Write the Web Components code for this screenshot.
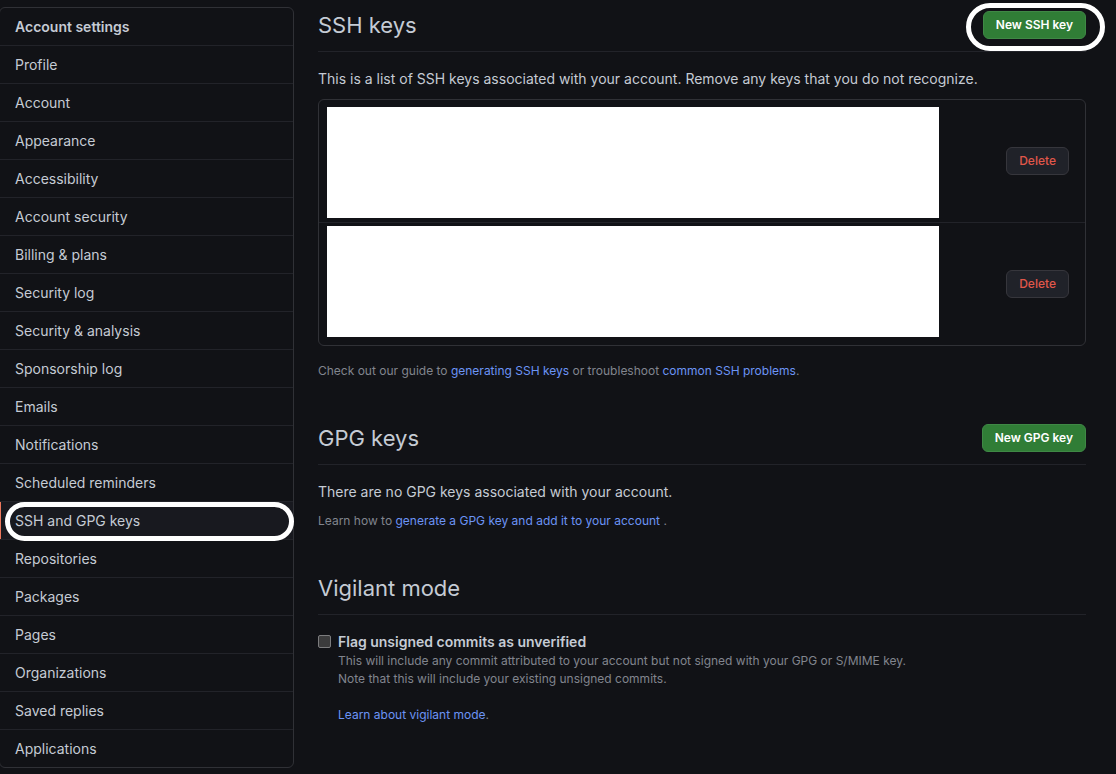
<!DOCTYPE html>
<html lang="en">
<head>
<meta charset="utf-8">
<meta name="viewport" content="width=device-width, initial-scale=1">
<title>SSH and GPG keys</title>
<style>
  :root {
    --canvas: #111216;
    --text: #c5cbd4;
    --muted: #81858e;
    --link: #6c94f5;
    --border: #303136;
    --line: #222329;
  }
  html { background: var(--canvas); }
  body {
    margin: 0;
    background: var(--canvas);
    color: var(--text);
    font: 14px/21px Inter, "Liberation Sans", sans-serif;
  }
</style>
</head>
<body>
<settings-page>
  <settings-nav slot="nav" heading="Account settings">
    <nav-item>Profile</nav-item>
    <nav-item>Account</nav-item>
    <nav-item>Appearance</nav-item>
    <nav-item>Accessibility</nav-item>
    <nav-item>Account security</nav-item>
    <nav-item>Billing &amp; plans</nav-item>
    <nav-item>Security log</nav-item>
    <nav-item>Security &amp; analysis</nav-item>
    <nav-item>Sponsorship log</nav-item>
    <nav-item>Emails</nav-item>
    <nav-item>Notifications</nav-item>
    <nav-item>Scheduled reminders</nav-item>
    <nav-item current>SSH and GPG keys</nav-item>
    <nav-item>Repositories</nav-item>
    <nav-item>Packages</nav-item>
    <nav-item>Pages</nav-item>
    <nav-item>Organizations</nav-item>
    <nav-item>Saved replies</nav-item>
    <nav-item>Applications</nav-item>
  </settings-nav>

  <settings-section heading="SSH keys">
    <action-button slot="action" kind="primary" ringed>New SSH key</action-button>
    <span>This is a list of SSH keys associated with your account. Remove any keys that you do not recognize.</span>
    <key-list></key-list>
    <small-note>Check out our guide to <text-link>generating SSH keys</text-link> or troubleshoot <text-link>common SSH problems</text-link>.</small-note>
  </settings-section>

  <settings-section heading="GPG keys">
    <action-button slot="action" kind="primary">New GPG key</action-button>
    <span>There are no GPG keys associated with your account.</span>
    <small-note>Learn how to <text-link>generate a GPG key and add it to your account</text-link> .</small-note>
  </settings-section>

  <settings-section heading="Vigilant mode">
    <vigilant-option></vigilant-option>
  </settings-section>
</settings-page>

<script>
const define = (name, markup, setup) => {
  const template = document.createElement('template');
  template.innerHTML = markup;
  customElements.define(name, class extends HTMLElement {
    constructor() {
      super();
      this.attachShadow({ mode: 'open' }).append(template.content.cloneNode(true));
    }
    connectedCallback() {
      if (setup) setup(this, this.shadowRoot);
    }
  });
};

const setHeading = (host, root) => {
  root.querySelector('h2').textContent = host.getAttribute('heading');
};

define('settings-page', `
  <style>
    :host {
      display: grid;
      grid-template-columns: minmax(200px, 295px) minmax(0, 1fr);
      column-gap: 24px;
      align-items: start;
      margin-left: -1px;
      padding: 7px 30px 6px 0;
    }
    main { display: flex; flex-direction: column; gap: 40px; }
  </style>
  <slot name="nav"></slot>
  <main><slot></slot></main>`);

define('settings-nav', `
  <style>
    :host { display: block; }
    nav { border: 1px solid var(--border); border-radius: 6px; }
    h2 { margin: 0; padding: 8px 15px; font: inherit; font-weight: 600; }
  </style>
  <nav aria-label="Account settings"><h2></h2><slot></slot></nav>`, setHeading);

define('nav-item', `
  <style>
    :host { display: block; position: relative; border-top: 1px solid var(--line); }
    :host([current]) { z-index: 1; }
    a { display: block; padding: 8px 15px; color: inherit; text-decoration: none; }
    :host([current]) a { background: #18191f; box-shadow: inset 1px 0 #ec775c; }
    :host([current])::after {
      content: "";
      position: absolute;
      inset: 0 -1px -2px 5px;
      border: 5px solid #fff;
      border-radius: 20px;
      pointer-events: none;
    }
  </style>
  <a href="#"><slot></slot></a>`, (host, root) => {
  if (host.hasAttribute('current')) root.querySelector('a').setAttribute('aria-current', 'page');
});

define('settings-section', `
  <style>
    :host { display: block; }
    header {
      display: flex;
      align-items: center;
      justify-content: space-between;
      padding-bottom: 8px;
      margin-bottom: 16px;
      border-bottom: 1px solid var(--line);
    }
    h2 { margin: 0; font-size: 22px; line-height: 36px; font-weight: 400; }
    .body { display: flex; flex-direction: column; gap: 10px; }
  </style>
  <section>
    <header><h2></h2><slot name="action"></slot></header>
    <div class="body"><slot></slot></div>
  </section>`, setHeading);

define('action-button', `
  <style>
    :host { display: block; position: relative; }
    button {
      display: block;
      box-sizing: border-box;
      padding: 3px 12px;
      border: 1px solid #36363c;
      border-radius: 6px;
      background: #202229;
      color: #e0574a;
      font: 500 12px/20px Inter, "Liberation Sans", sans-serif;
      white-space: nowrap;
    }
    :host([kind="primary"]) button { background: #307d36; border-color: #3f8845; color: #fff; font-weight: 600; }
    :host([ringed])::after {
      content: "";
      position: absolute;
      inset: -8px -19px -12px -17px;
      border: 5px solid #fff;
      border-radius: 24px;
      pointer-events: none;
    }
  </style>
  <button type="button"><slot></slot></button>`);

define('key-list', `
  <style>
    :host { display: block; margin-bottom: 6px; }
    ul { list-style: none; margin: 0; padding: 0; border: 1px solid var(--border); border-radius: 6px; }
    li { display: flex; align-items: center; justify-content: space-between; padding: 0 16px 0 8px; }
    li + li { border-top: 1px solid var(--line); }
    .cover { flex: 0 1 612px; height: 111px; margin: 7px 16px 4px 0; background: #fff; }
    li + li .cover { margin: 3px 16px 8px 0; }
  </style>
  <ul>
    <li><div class="cover"></div><action-button>Delete</action-button></li>
    <li><div class="cover"></div><action-button>Delete</action-button></li>
  </ul>`);

define('small-note', `
  <style>
    :host { display: block; color: var(--muted); font-size: 12px; line-height: 18px; }
  </style>
  <slot></slot>`);

define('text-link', `
  <style>a { color: var(--link); text-decoration: none; }</style><a href="#"><slot></slot></a>`);

define('vigilant-option', `
  <style>
    :host { display: grid; grid-template-columns: 13px 1fr; column-gap: 7px; }
    input {
      appearance: none;
      box-sizing: border-box;
      width: 13px;
      height: 13px;
      margin: 4px 0 0;
      border: 1px solid #7c7c7e;
      border-radius: 2px;
      background: #3b3b3c;
    }
    label { font-weight: 600; }
    p { grid-column: 2; margin: 0; color: var(--muted); font-size: 12px; line-height: 18px; }
    p + p { margin-top: 18px; }
  </style>
  <input type="checkbox" id="flag" aria-describedby="about">
  <label for="flag">Flag unsigned commits as unverified</label>
  <p id="about">This will include any commit attributed to your account but not signed with your GPG or S/MIME key.<br>Note that this will include your existing unsigned commits.</p>
  <p><text-link>Learn about vigilant mode</text-link>.</p>`);
</script>
</body>
</html>
